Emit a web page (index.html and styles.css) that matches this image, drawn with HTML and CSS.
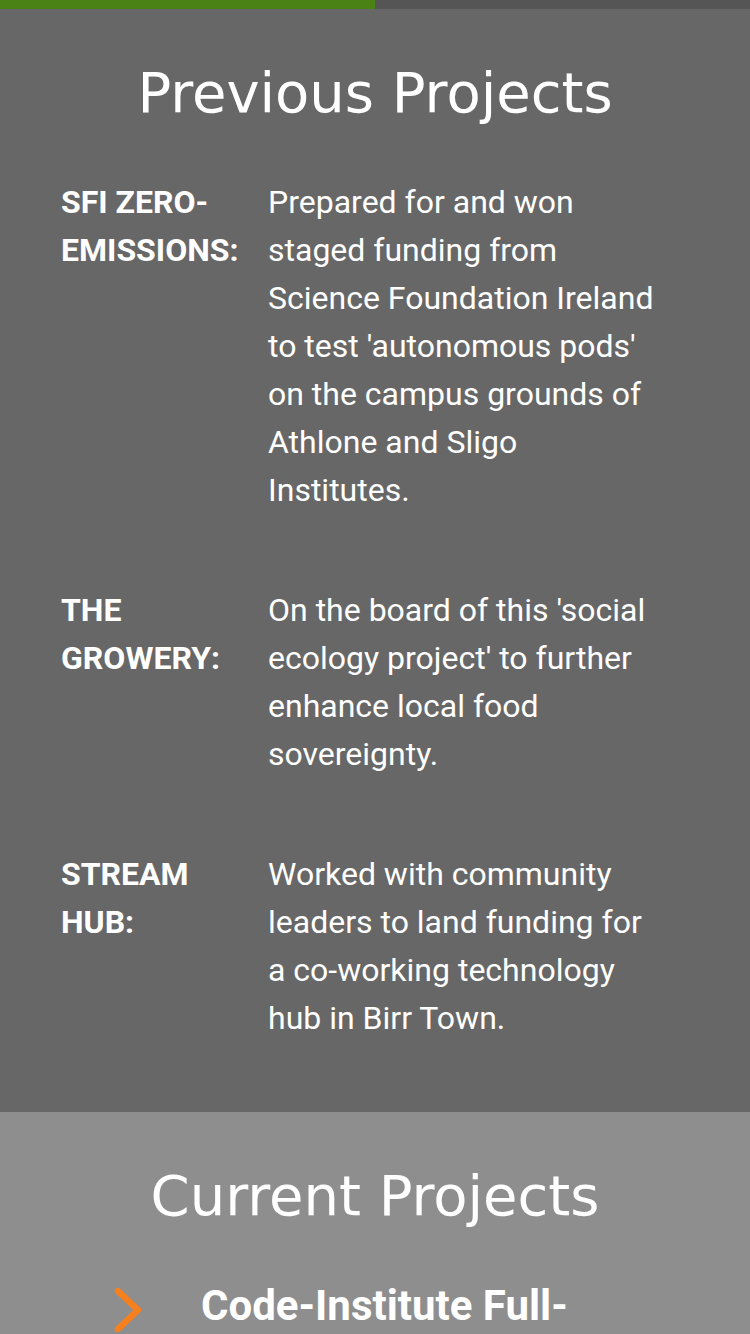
FILE: index.html
```html
<!DOCTYPE html>
<html lang="en">
<head>
<meta charset="utf-8">
<title>Projects</title>
<link rel="stylesheet" href="styles.css">
</head>
<body>
<div class="progress">
  <div class="progress-fill"></div>
  <div class="progress-rest"></div>
</div>
<section class="previous">
  <h2 class="section-title">Previous Projects</h2>
  <div class="project">
    <div class="project-label">SFI ZERO-EMISSIONS:</div>
    <div class="project-text">Prepared for and won staged funding from Science Foundation Ireland to test 'autonomous pods' on the campus grounds of Athlone and Sligo Institutes.</div>
  </div>
  <div class="project">
    <div class="project-label">THE GROWERY:</div>
    <div class="project-text">On the board of this 'social ecology project' to further enhance local food sovereignty.</div>
  </div>
  <div class="project">
    <div class="project-label">STREAM HUB:</div>
    <div class="project-text">Worked with community leaders to land funding for a co-working technology hub in Birr Town.</div>
  </div>
</section>
<section class="current">
  <h2 class="section-title">Current Projects</h2>
  <div class="current-item">
    <svg class="chevron" width="30" height="44" viewBox="0 0 30 44"><path d="M4 3 L24 22 L4 41" fill="none" stroke="#f7801e" stroke-width="6.5" stroke-linecap="round" stroke-linejoin="round"/></svg>
    <div class="current-title">Code-Institute Full-Stack</div>
  </div>
</section>
</body>
</html>
```
FILE: styles.css
```css
html, body {
  margin: 0;
  padding: 0;
}
body {
  width: 750px;
  background: #8e8e8e;
  font-family: Roboto, "Liberation Sans", sans-serif;
  color: #fff;
  overflow: hidden;
}
.progress {
  display: flex;
  height: 9px;
}
.progress-fill {
  width: 375px;
  background: #4a8216;
}
.progress-rest {
  flex: 1;
  background: #555555;
}
.previous {
  background: #676767;
  padding: 40px 92px 70px 61px;
}
.section-title {
  margin: 0;
  font-family: "DejaVu Sans", sans-serif;
  font-weight: normal;
  font-size: 56px;
  line-height: 88px;
  text-align: center;
  color: #fff;
}
.previous .section-title {
  margin: 0 -92px 41px -61px;
}
.project {
  display: grid;
  grid-template-columns: 207px 1fr;
  font-size: 32px;
  line-height: 48px;
  margin-bottom: 72px;
}
.project:last-child {
  margin-bottom: 0;
}
.project-label {
  font-weight: bold;
  padding-right: 20px;
}
.current {
  padding: 40px 0 0 0;
}
.current .section-title {
  margin-bottom: 34px;
}
.current-item {
  display: flex;
  align-items: flex-start;
  padding-left: 114px;
}
.chevron {
  margin-top: 14px;
  flex: none;
}
.current-title {
  margin-left: 57px;
  font-size: 42px;
  font-weight: bold;
  line-height: 63px;
  width: 420px;
}
```
